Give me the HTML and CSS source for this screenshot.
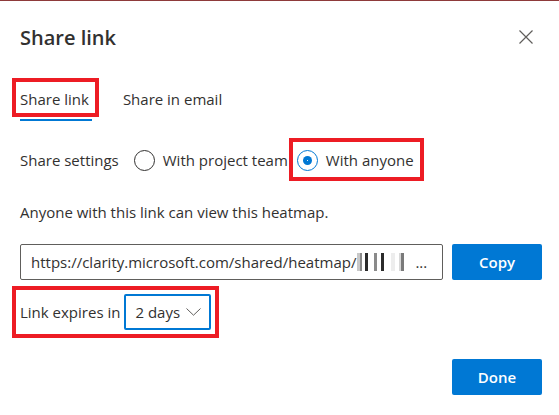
FILE: index.html
```html
<!DOCTYPE html>
<html lang="en">
<head>
    <meta charset="UTF-8">
    <meta name="viewport" content="width=device-width, initial-scale=1.0">
    <title>Share link</title>
    <link rel="stylesheet" href="styles.css">
</head>
<body>
    <div class="dialog">
        <div class="header">
            <h1>Share link</h1>
            <button class="close" aria-label="Close">
                <svg width="14" height="14" viewBox="0 0 14 14">
                    <path d="M0.5 0.5 L13.5 13.5 M13.5 0.5 L0.5 13.5" stroke="#605e5c" stroke-width="1.2" fill="none"/>
                </svg>
            </button>
        </div>

        <div class="tabs">
            <button class="tab active"><span class="mark mark-tab">Share link</span></button>
            <button class="tab">Share in email</button>
        </div>

        <div class="settings">
            <span class="settings-label">Share settings</span>
            <label class="radio"><span class="circle"></span>With project team</label>
            <label class="radio checked mark mark-radio"><span class="circle"></span>With anyone</label>
        </div>

        <p class="hint">Anyone with this link can view this heatmap.</p>

        <div class="link-row">
            <div class="link-field">
                <span class="url">https://clarity.microsoft.com/shared/heatmap/</span>
                <span class="redacted"></span>
                <span class="dots">...</span>
            </div>
            <button class="btn primary">Copy</button>
        </div>

        <div class="expiry mark mark-expiry">
            <span>Link expires in</span>
            <div class="select">
                <span>2 days</span>
                <svg width="15" height="8" viewBox="0 0 15 8">
                    <path d="M0.5 0.5 L7.5 7.2 L14.5 0.5" stroke="#605e5c" stroke-width="1" fill="none"/>
                </svg>
            </div>
        </div>

        <div class="footer">
            <button class="btn primary">Done</button>
        </div>
    </div>
</body>
</html>
```

FILE: styles.css
```css
body {
    margin: 0;
    background-color: #ffffff;
    color: #323130;
    font-family: 'Open Sans', 'Noto Sans', sans-serif;
    font-size: 15px;
    border-top: 1px solid #8e3a3a;
}

.dialog {
    padding: 18px 17px 0 20px;
}

.header {
    display: flex;
    justify-content: space-between;
    align-items: center;
    height: 36px;
}

.header h1 {
    margin: 0;
    font-size: 20px;
    font-weight: 600;
}

.close {
    width: 32px;
    height: 32px;
    padding: 0;
    border: none;
    background: none;
    display: flex;
    align-items: center;
    justify-content: center;
}

/* red annotation boxes drawn over the screenshot */
.mark {
    position: relative;
}

.mark::after {
    content: '';
    position: absolute;
    border: 4px solid #ed1c24;
    pointer-events: none;
}

.mark-tab::after {
    top: -11px;
    bottom: -8px;
    left: -8px;
    right: -10px;
}

.mark-radio::after {
    top: -12px;
    bottom: -10px;
    left: -8px;
    right: -10px;
}

.mark-expiry::after {
    top: -8px;
    bottom: -8px;
    left: -8px;
    right: -8px;
}

.tabs {
    display: flex;
    margin-top: 22px;
    height: 44px;
}

.tab {
    position: relative;
    display: flex;
    align-items: center;
    padding: 0;
    margin-right: 34px;
    border: none;
    background: none;
    font: inherit;
    color: #323130;
}

.tab.active::before {
    content: '';
    position: absolute;
    left: 0;
    right: -3px;
    bottom: 0;
    height: 2px;
    background-color: #0078d4;
}

.settings {
    display: flex;
    align-items: center;
    margin-top: 27px;
    height: 24px;
}

.settings-label {
    margin-right: 15px;
}

.radio {
    display: inline-flex;
    align-items: center;
    margin-right: 9px;
}

.circle {
    width: 19px;
    height: 19px;
    border: 1px solid #323130;
    border-radius: 50%;
    margin-right: 8px;
    position: relative;
}

.checked .circle {
    border-color: #0078d4;
}

.checked .circle::before {
    content: '';
    position: absolute;
    top: 5px;
    left: 5px;
    width: 9px;
    height: 9px;
    border-radius: 50%;
    background-color: #0078d4;
}

.checked .circle::after {
    content: '';
    position: absolute;
    top: 9px;
    left: 9px;
    width: 1px;
    height: 1px;
    background-color: #dfeefa;
}

.hint {
    margin: 30px 0 0;
    line-height: 20px;
}

.link-row {
    display: flex;
    gap: 9px;
    margin-top: 22px;
}

.link-field {
    flex: 1;
    height: 36px;
    box-sizing: border-box;
    border: 1px solid #605e5c;
    border-radius: 2px;
    padding: 0 10px;
    display: flex;
    align-items: center;
    white-space: nowrap;
    overflow: hidden;
}

.redacted {
    width: 53px;
    height: 18px;
    margin-left: 1px;
    background: linear-gradient(to right,
        #c8c8c8 0, #c8c8c8 3px, #8a8a8a 3px, #8a8a8a 5px,
        #ffffff 5px, #ffffff 8px, #2b2b2b 8px, #2b2b2b 11px,
        #ffffff 11px, #ffffff 17px, #8a8a8a 17px, #8a8a8a 20px,
        #ffffff 20px, #ffffff 24px, #2b2b2b 24px, #2b2b2b 27px,
        #ffffff 27px, #ffffff 34px, #ededed 34px, #ededed 38px,
        #ffffff 38px, #ffffff 42px, #d8d8d8 42px, #d8d8d8 44px,
        #7a7a7a 44px, #7a7a7a 47px, #ffffff 47px);
}

.dots {
    margin-left: 5px;
}

.btn {
    width: 90px;
    height: 36px;
    border: none;
    border-radius: 2px;
    font: inherit;
    font-weight: 600;
    padding: 0;
}

.primary {
    background-color: #0078d4;
    color: #ffffff;
}

.expiry {
    display: inline-flex;
    align-items: center;
    gap: 4px;
    margin-top: 14px;
}

.select {
    display: flex;
    align-items: center;
    justify-content: space-between;
    width: 87px;
    height: 36px;
    box-sizing: border-box;
    border: 2px solid #0078d4;
    border-radius: 2px;
    padding: 0 8px 0 9px;
}

.footer {
    display: flex;
    justify-content: flex-end;
    margin-top: 29px;
}
```
